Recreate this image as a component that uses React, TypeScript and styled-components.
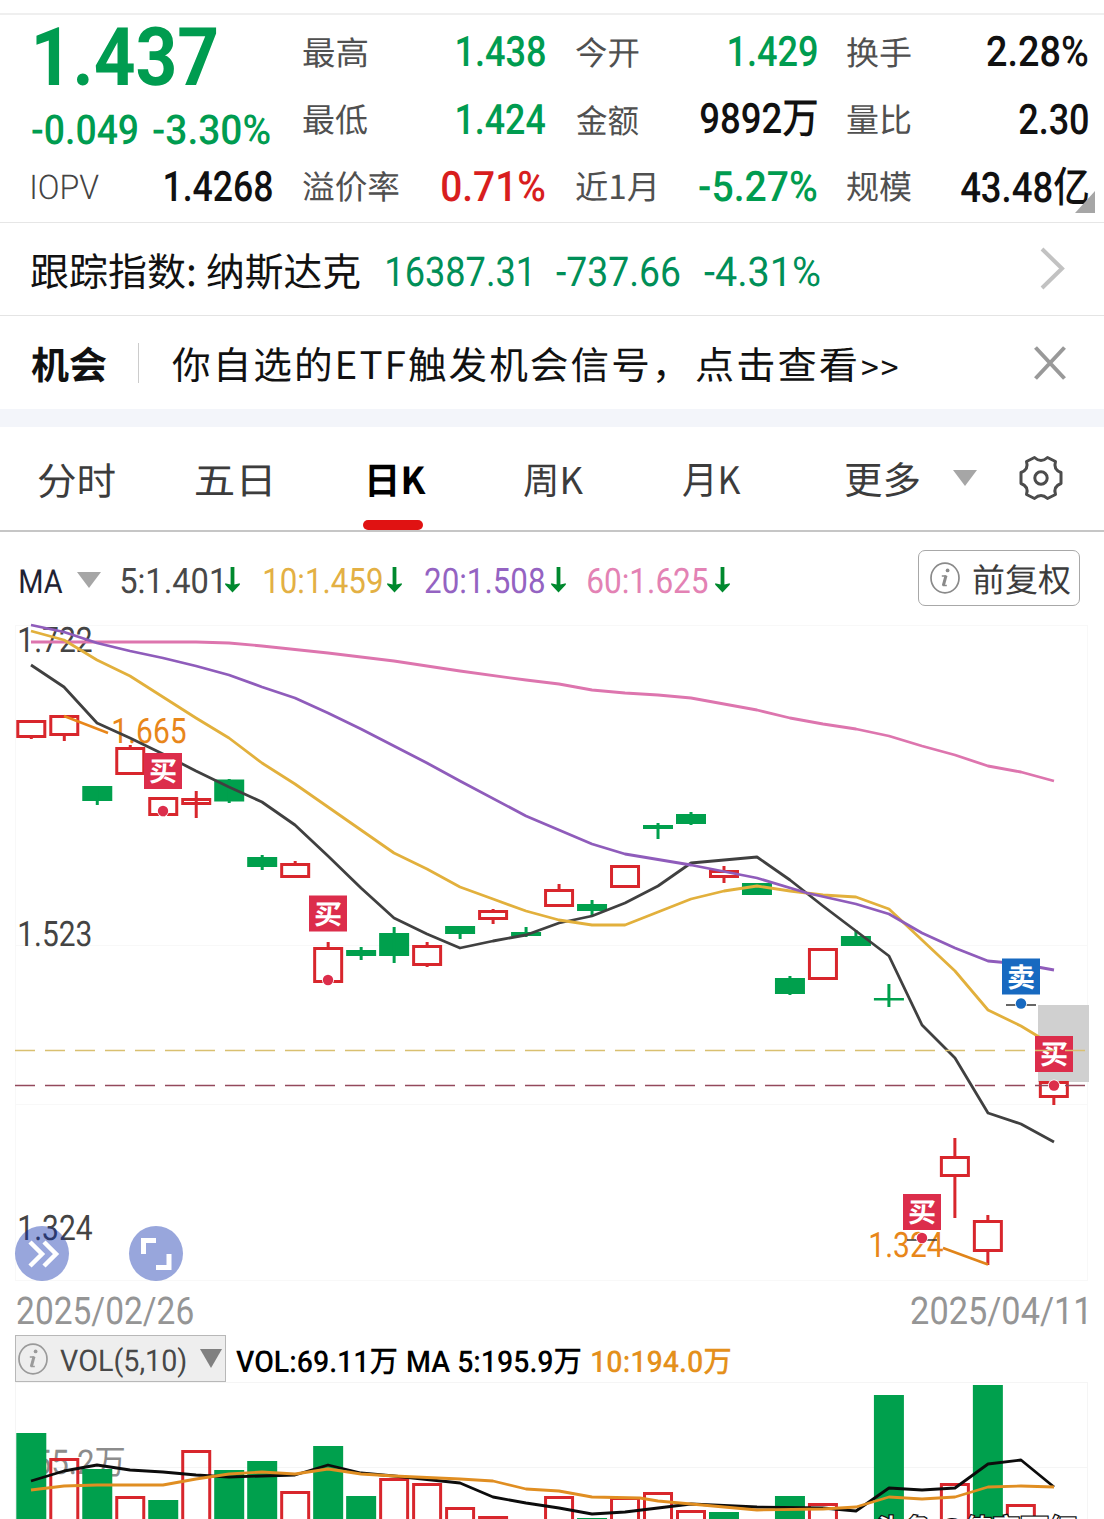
import React, { useLayoutEffect, useState } from "react";
import styled, { createGlobalStyle } from "styled-components";

const LATIN = 'Roboto, "Noto Sans CJK SC", sans-serif';
const HAN = '"Noto Sans CJK SC", "Noto Sans", sans-serif';
const GREEN = "#009c50";
const UP = "#d8262c";
const DOWN = "#00a04d";

const GlobalStyle = createGlobalStyle`
  *, *::before, *::after { box-sizing: border-box; }
  body { margin: 0; background: #fff; font-family: ${LATIN}; }
`;

/* ---------- text that is condensed to a given ink width ---------- */

type Ink = { left: number; width: number; ascent: number; descent: number; baseline: number };

function useInk(text: string, font: string, size: number, spacing = 0): Ink {
  const [ink, setInk] = useState<Ink>({ left: 0, width: 0, ascent: 0, descent: 0, baseline: 0 });
  useLayoutEffect(() => {
    const ctx = document.createElement("canvas").getContext("2d") as any;
    ctx.font = font;
    ctx.textRendering = "geometricPrecision";
    ctx.letterSpacing = `${spacing}px`;
    const m = ctx.measureText(text);
    setInk({
      left: m.actualBoundingBoxLeft,
      width: m.actualBoundingBoxLeft + m.actualBoundingBoxRight,
      ascent: m.actualBoundingBoxAscent,
      descent: m.actualBoundingBoxDescent,
      baseline: size / 2 + (m.fontBoundingBoxAscent - m.fontBoundingBoxDescent) / 2,
    });
  }, [text, font, size, spacing]);
  return ink;
}

const InkBox = styled.span<{ $w: number; $ml: number }>`
  display: block;
  flex: none;
  width: ${(p) => p.$w}px;
  margin-left: ${(p) => p.$ml}px;
`;

const InkRun = styled.span<{ $size: number; $weight: number; $color: string; $han: boolean; $ls: number }>`
  display: block;
  width: max-content;
  white-space: pre;
  transform-origin: 0 0;
  font-family: ${(p) => (p.$han ? HAN : LATIN)};
  font-size: ${(p) => p.$size}px;
  font-weight: ${(p) => p.$weight};
  line-height: ${(p) => p.$size}px;
  letter-spacing: ${(p) => p.$ls}px;
  text-rendering: geometricPrecision;
  color: ${(p) => p.$color};
`;

type TextProps = {
  children: string;
  w: number;
  size: number;
  weight?: number;
  color?: string;
  han?: boolean;
  ls?: number;
  ml?: number;
  dy?: number;
};

function Text({ children, w, size, weight = 400, color = "#111", han = false, ls = 0, ml = 0, dy = 0 }: TextProps) {
  const ink = useInk(children, `${weight} ${size}px ${han ? HAN : LATIN}`, size, ls);
  const s = ink.width ? w / ink.width : 1;
  return (
    <InkBox $w={w} $ml={ml} style={{ height: ink.ascent + ink.descent }}>
      <InkRun
        $size={size}
        $weight={weight}
        $color={color}
        $han={han}
        $ls={ls}
        style={{ transform: `translate(${ink.left * s}px, ${ink.ascent - ink.baseline + dy}px) scaleX(${s})` }}
      >
        {children}
      </InkRun>
    </InkBox>
  );
}

const ChartLabel = styled.text<{ $size: number; $weight: number }>`
  font-family: ${LATIN};
  font-size: ${(p) => p.$size}px;
  font-weight: ${(p) => p.$weight};
  text-rendering: geometricPrecision;
`;

function SvgText({ x, y, w, size, weight = 400, fill, children }: {
  x: number; y: number; w: number; size: number; weight?: number; fill: string; children: string;
}) {
  const ink = useInk(children, `${weight} ${size}px ${LATIN}`, size);
  const s = ink.width ? w / ink.width : 1;
  return (
    <ChartLabel $size={size} $weight={weight} fill={fill} transform={`translate(${x + ink.left * s} ${y}) scale(${s} 1)`}>
      {children}
    </ChartLabel>
  );
}

/* ---------- layout parts ---------- */

const Page = styled.main`
  width: 1104px;
  height: 1519px;
  overflow: hidden;
  background: #fff;
  display: flex;
  flex-direction: column;
`;

const TopRule = styled.div`
  flex: none;
  height: 15px;
  border-bottom: 2px solid #efefef;
`;

const Quote = styled.section`
  position: relative;
  flex: none;
  height: 208px;
  padding: 3px 16px 0 31px;
  display: flex;
  border-bottom: 1px solid #e6e6e6;
`;

const PriceColumn = styled.div`
  width: 241px;
  margin-right: 31px;
  display: grid;
  grid-template-rows: 76px 70px 46px;
`;

const Stats = styled.div`
  display: grid;
  grid-template-columns: 242px 241px 241px;
  grid-template-rows: 68px 67px 67px;
  column-gap: 30.5px;
`;

const Cell = styled.div`
  display: flex;
  align-items: center;
  justify-content: space-between;
`;

const Line = styled.div`
  display: flex;
  align-items: center;
`;

const Corner = styled.i`
  position: absolute;
  right: 9px;
  bottom: 9px;
  border-style: solid;
  border-width: 0 0 22px 20px;
  border-color: transparent transparent #a6a6a6 transparent;
`;

const InfoRow = styled.section<{ $h: number; $rule?: boolean }>`
  flex: none;
  display: flex;
  align-items: center;
  height: ${(p) => p.$h}px;
  padding: 0 38px 0 31px;
  border-bottom: ${(p) => (p.$rule ? "1px solid #e4e4e4" : "0")};
`;

const Divider = styled.span`
  width: 1px;
  height: 40px;
  margin-left: 31px;
  background: #ccc;
`;

const RightIcon = styled.svg`
  margin-left: auto;
  display: block;
`;

const Band = styled.div`
  flex: none;
  height: 18px;
  background: #f3f5fa;
`;

const Tabs = styled.nav`
  flex: none;
  display: flex;
  height: 105px;
  padding: 0 0 2px 38px;
  border-bottom: 2px solid #c6c6c6;
`;

const Tab = styled.div<{ $w: number; $active?: boolean }>`
  position: relative;
  width: ${(p) => p.$w}px;
  display: flex;
  align-items: center;
  &::after {
    content: "";
    display: ${(p) => (p.$active ? "block" : "none")};
    position: absolute;
    left: -6px;
    bottom: -2px;
    width: 60px;
    height: 10px;
    border-radius: 5px;
    background: #e01212;
  }
`;

const Triangle = styled.i<{ $w: number; $h: number; $ml: number; $color: string }>`
  flex: none;
  margin-left: ${(p) => p.$ml}px;
  border-style: solid;
  border-width: ${(p) => p.$h}px ${(p) => p.$w / 2}px 0;
  border-color: ${(p) => p.$color} transparent transparent;
`;

const MaRow = styled.section`
  flex: none;
  display: flex;
  align-items: center;
  height: 88px;
  padding: 8px 24px 0 20px;
`;

const ArrowIcon = styled.svg<{ $gap: number }>`
  flex: none;
  margin-left: ${(p) => p.$gap}px;
`;

const GearIcon = styled.svg`
  margin-left: 41px;
  align-self: center;
`;

const AdjustButton = styled.button`
  margin: -4px 0 0 auto;
  width: 162px;
  height: 56px;
  padding: 0 9px 0 11px;
  display: flex;
  align-items: center;
  justify-content: space-between;
  background: #fff;
  border: 1px solid #a8a8a8;
  border-radius: 7px;
`;

const ChartArea = styled.section`
  position: relative;
  flex: none;
  height: 661px;
`;

const ChartSvg = styled.svg`
  display: block;
`;

const RoundButton = styled.button<{ $left: number }>`
  position: absolute;
  left: ${(p) => p.$left}px;
  top: 606px;
  width: 54px;
  height: 55px;
  padding: 0;
  border: 0;
  border-radius: 50%;
  background: rgba(10, 43, 171, 0.42);
`;

const Dates = styled.div`
  flex: none;
  display: flex;
  align-items: center;
  justify-content: space-between;
  height: 54px;
  padding: 4px 18px 0 17px;
`;

const VolumeHeader = styled.div`
  flex: none;
  display: flex;
  align-items: center;
  height: 47px;
  padding-left: 15px;
`;

const Selector = styled.button`
  display: flex;
  align-items: center;
  width: 211px;
  height: 47px;
  padding: 0 0 0 2px;
  background: #eee;
  border: 1px solid #b8b8b8;
`;

/* ---------- icons ---------- */

const InfoIcon = ({ color }: { color: string }) => (
  <svg width="30" height="32" viewBox="0 0 30 32" fill="none" stroke={color}>
    <ellipse cx="15" cy="16" rx="14" ry="14.8" strokeWidth="1.7" />
    <circle cx="17.6" cy="8.4" r="1.9" fill={color} stroke="none" />
    <path d="M11.8 14h4l-2.600 9.600h3.600" strokeWidth="1.500" strokeLinejoin="round" />
    <path d="M16 13.600l-2.700 10" strokeWidth="3" />
  </svg>
);

const Arrow = ({ gap }: { gap: number }) => (
  <ArrowIcon $gap={gap} width="15" height="26" viewBox="0 0 15 26">
    <path d="M5.6 0h3.800v17.500l5.400-1.300v1.600L7.500 25.500 .2 17.800v-1.600l5.400 1.300z" fill="#00892e" />
  </ArrowIcon>
);

const Gear = () => (
  <GearIcon width="46" height="48" viewBox="-23 -24 46 48" fill="none" stroke="#4c4c4c" strokeWidth="3" strokeLinejoin="round">
    <path d="M-6.500-20.500Q0-14.500 6.500-20.500L14.500-16.500Q12-8.500 20-5.500V5.500Q12 8.500 14.500 16.500L6.500 20.500Q0 14.500-6.500 20.500L-14.500 16.500Q-12 8.500-20 5.500V-5.500Q-12-8.500-14.500-16.500Z" />
    <circle r="6.200" />
  </GearIcon>
);

/* ---------- data ---------- */

const X0 = 31.3;
const STEP = 32.985;
const cx = (i: number) => X0 + STEP * i;

// index, rising, body top, body bottom, wick top, wick bottom
const candles: [number, boolean, number, number, number, number][] = [
  [0, true, 720, 738, 720, 739], [1, true, 715, 736, 715, 741], [2, false, 786, 801, 786, 805],
  [3, true, 747, 775, 745, 775], [4, true, 797, 816, 797, 817], [5, true, 798, 805, 791, 818],
  [6, false, 779.5, 801.5, 779, 803], [7, false, 857, 867, 855, 870], [8, true, 863, 878, 861, 878],
  [9, true, 947, 983, 942, 983], [10, false, 950, 956, 947, 960], [11, false, 933, 956, 927, 963],
  [12, true, 945, 966, 942, 967], [13, false, 926, 934, 926, 939], [14, true, 910, 920, 909, 924],
  [15, false, 932, 936, 927, 937], [16, true, 889, 907, 884, 907], [17, false, 904, 911, 900, 915],
  [18, true, 865, 888, 865, 888], [19, false, 825, 829, 823, 839], [20, false, 814, 824, 812, 825],
  [21, true, 870, 878, 866, 883], [22, false, 883, 895, 883, 895], [23, false, 978, 994, 976, 995],
  [24, true, 948, 980, 948, 980], [25, false, 936, 946, 930, 946], [26, false, 998, 1000.5, 984, 1007],
  [28, true, 1156, 1177, 1138, 1218], [29, true, 1220, 1252, 1215, 1265], [31, true, 1081, 1098, 1081, 1105],
];

const volumes: [number, boolean, number][] = [
  [0, false, 1433], [1, true, 1458], [2, false, 1469], [3, true, 1496], [4, false, 1500], [5, true, 1450],
  [6, false, 1470], [7, false, 1461], [8, true, 1491], [9, false, 1446], [10, false, 1496], [11, true, 1478],
  [12, true, 1483], [13, true, 1507], [14, true, 1516], [16, true, 1496], [17, false, 1518], [18, true, 1497],
  [19, true, 1492], [20, true, 1510], [21, false, 1512], [23, false, 1496], [24, true, 1503], [26, false, 1395],
  [28, true, 1483], [29, false, 1385], [30, true, 1504],
];

const MA5 = "31,665 64,687 97,723 130,738 163,754 196,771 229,787 262,802 295,825 328,856 361,888 394,918 427,934 460,948 493,941 526,935 559,923 592,916 625,903 658,886 691,863 757,857 790,880 823,906 856,931 889,956 922,1025 955,1058 988,1113 1021,1124 1054,1142";
const MA10 = "31,631 64,640 97,660 130,676 163,697 196,718 229,738 262,763 295,784 328,807 361,830 394,853 427,869 460,887 493,899 526,911 559,920 592,925 625,925 658,912 691,899 724,891 757,886 790,891 823,895 856,897 889,909 922,940 955,971 988,1010 1021,1026 1054,1046";
const MA20 = "31,625 64,632 97,643 130,651 163,658 196,666 229,675 262,687 295,698 328,713 361,729 394,746 427,763 460,781 526,816 592,844 625,854 691,865 757,878 807,893 856,904 889,914 922,933 955,948 988,961 1021,964 1054,970";
const MA60 = "31,642 196,642 229,643 262,646 328,653 394,661 460,671 526,680 559,684 592,690 625,693 658,695 691,698 757,710 790,718 823,724 856,729 889,736 922,746 955,755 988,766 1021,772 1054,781";
const VMA5 = "31,1481 64,1471 97,1465 130,1470 163,1472 196,1475 229,1477 262,1476 295,1475 328,1465 361,1473 394,1476 460,1483 493,1497 526,1503 559,1508 592,1514 625,1512 658,1508 691,1504 757,1507 823,1508 856,1511 889,1488 922,1490 955,1488 988,1464 1021,1460 1054,1487";
const VMA10 = "31,1490 64,1486 97,1485 163,1485 196,1479 229,1474 262,1472 295,1474 328,1469 361,1474 394,1476 460,1479 493,1481 526,1489 559,1491 592,1497 640,1498 658,1501 691,1504 757,1510 823,1509 856,1507 889,1497 922,1499 955,1497 988,1487 1021,1486 1054,1487";

function Candle({ c }: { c: [number, boolean, number, number, number, number] }) {
  const [i, up, top, bottom, hi, lo] = c;
  const x = cx(i);
  if (!up) {
    return (
      <g fill={DOWN}>
        <rect x={x - 15} y={top} width="30" height={bottom - top} />
        <rect x={x - 1.5} y={hi} width="3" height={lo - hi} />
      </g>
    );
  }
  return (
    <g>
      <rect x={x - 1.5} y={hi} width="3" height={top - hi} fill={UP} />
      <rect x={x - 1.5} y={bottom} width="3" height={lo - bottom} fill={UP} />
      {i === 5 && <rect x={x - 1.5} y={top} width="3" height={bottom - top} fill={UP} />}
      <rect x={x - 13.5} y={top + 1.5} width="27" height={bottom - top - 3} fill="none" stroke={UP} strokeWidth="3" />
    </g>
  );
}

function Badge({ x, y, color, label, dotY, line }: {
  x: number; y: number; color: string; label: string; dotY: number; line?: number;
}) {
  return (
    <g>
      {line && <path d={`M${x - 15} ${line}h30`} stroke="#333" strokeWidth="1.5" />}
      <circle cx={x} cy={dotY} r="6" fill="#fff" />
      <circle cx={x} cy={dotY} r="5.2" fill={color} />
      <rect x={x - 19} y={y} width="38" height="36" fill={color} />
      <SvgText x={x - 13} y={y + 28} w={26} size={27} weight={600} fill="#fff">{label}</SvgText>
    </g>
  );
}

const Curve = ({ points, color, width = 2.8 }: { points: string; color: string; width?: number }) => (
  <polyline points={points} fill="none" stroke={color} strokeWidth={width} strokeLinejoin="round" />
);

function PriceChart() {
  return (
    <ChartSvg width="1104" height="661" viewBox="0 620 1104 661">
      <path d="M15.5 625.5H1088M15.5 945.5H1088M15.5 1104.5H1088M15.5 1280.5H1088M15.5 625V1281M1087.5 625V1281" stroke="#f8f8f8" fill="none" />
      <rect x="1038" y="1005" width="51" height="77" fill="#d0d0d0" />
      <SvgText x={19} y={652} w={73} size={35} fill="#444">1.722</SvgText>
      <SvgText x={19} y={946} w={72} size={35} fill="#444">1.523</SvgText>
      <SvgText x={19} y={1240} w={73} size={35} fill="#444">1.324</SvgText>
      {candles.map((c) => <Candle key={c[0]} c={c} />)}
      <path d="M64 716L108 733" stroke="#e8861a" strokeWidth="2.5" />
      <SvgText x={113} y={743} w={73} size={35} fill="#e8861a">1.665</SvgText>
      <Curve points={MA60} color="#dd75ae" />
      <Curve points={MA5} color="#404040" />
      <Curve points={MA10} color="#e2b03c" />
      <Curve points={MA20} color="#8f5cbb" />
      <path d="M943 1248L988 1264.5" stroke="#e0841a" strokeWidth="2.8" />
      <SvgText x={870} y={1257} w={73} size={35} fill="#e8861a">1.324</SvgText>
      <path d="M15 1085.5H1085" stroke="#93495c" strokeWidth="1.5" strokeDasharray="20 10" />
      <Badge x={163} y={753} color="#dc2d4b" label="买" dotY={811} />
      <Badge x={328} y={895.5} color="#dc2d4b" label="买" dotY={980} />
      <Badge x={922} y={1194} color="#dc2d4b" label="买" dotY={1238} line={1240} />
      <Badge x={1021} y={958.5} color="#1769c0" label="卖" dotY={1003.5} line={1005} />
      <Badge x={1054} y={1036} color="#dc2d4b" label="买" dotY={1085.5} />
      <path d="M15 1050.5H1085" stroke="#d9c070" strokeWidth="1.5" strokeDasharray="20 10" />
    </ChartSvg>
  );
}

function VolumeChart() {
  return (
    <ChartSvg width="1104" height="137" viewBox="0 1382 1104 137">
      <path d="M15.5 1382.5H1088M15.5 1467.5H1088M15.5 1382V1519M1087.5 1382V1519" stroke="#f5f5f5" fill="none" />
      <SvgText x={17} y={1474} w={107} size={34} fill="#8c8c8c">255.2万</SvgText>
      {volumes.map(([i, up, y]) =>
        up ? (
          <rect key={i} x={cx(i) - 13.5} y={y + 1.5} width="27" height="180" fill="none" stroke={UP} strokeWidth="3" />
        ) : (
          <rect key={i} x={cx(i) - 15} y={y} width="30" height="180" fill={DOWN} />
        ),
      )}
      <Curve points={VMA5} color="#0c0c0c" />
      <Curve points={VMA10} color="#e08e22" />
      <g stroke="#111" strokeWidth="2.500" paintOrder="stroke">
        <SvgText x={876} y={1538} w={200} size={27} weight={500} fill="#fff">头条 @倚窗丽红</SvgText>
      </g>
    </ChartSvg>
  );
}

const stats: { label: string; lw: number; value: string; vw: number; color: string }[] = [
  { label: "最高", lw: 64, value: "1.438", vw: 88, color: GREEN },
  { label: "今开", lw: 63, value: "1.429", vw: 88, color: GREEN },
  { label: "换手", lw: 64, value: "2.28%", vw: 101, color: "#111" },
  { label: "最低", lw: 64, value: "1.424", vw: 88, color: GREEN },
  { label: "金额", lw: 63, value: "9892万", vw: 117, color: "#111" },
  { label: "量比", lw: 64, value: "2.30", vw: 69, color: "#111" },
  { label: "溢价率", lw: 96, value: "0.71%", vw: 103, color: "#d81e1e" },
  { label: "近1月", lw: 79, value: "-5.27%", vw: 118, color: GREEN },
  { label: "规模", lw: 64, value: "43.48亿", vw: 127, color: "#111" },
];

const averages = [
  { text: "5:1.401", w: 100, color: "#484848", ml: 20, gap: 4 },
  { text: "10:1.459", w: 118, color: "#e3b044", ml: 24, gap: 5 },
  { text: "20:1.508", w: 119, color: "#9463c2", ml: 23, gap: 7 },
  { text: "60:1.625", w: 120, color: "#e382b4", ml: 22, gap: 7 },
];

export default function App() {
  return (
    <Page>
      <GlobalStyle />
      <TopRule />
      <Quote>
        <PriceColumn>
          <Line><Text w={181} size={81} weight={700} color={GREEN} ml={5}>1.437</Text></Line>
          <Line>
            <Text w={105} size={41} weight={500} color={GREEN} ml={1}>-0.049</Text>
            <Text w={117} size={41} weight={500} color={GREEN} ml={16}>-3.30%</Text>
          </Line>
          <Cell>
            <Text w={67} size={34} weight={300} color="#444" ml={1}>IOPV</Text>
            <Text w={107} size={42} weight={500} dy={-1}>1.4268</Text>
          </Cell>
        </PriceColumn>
        <Stats>
          {stats.map((s) => (
            <Cell key={s.label}>
              <Text w={s.lw} size={33} color="#505050" han>{s.label}</Text>
              <Text w={s.vw} size={42} weight={500} color={s.color} dy={-1}>{s.value}</Text>
            </Cell>
          ))}
        </Stats>
        <Corner />
      </Quote>

      <InfoRow $h={93} $rule>
        <Text w={163} size={39} han dy={2}>跟踪指数:</Text>
        <Text w={153} size={39} han ml={13} dy={2}>纳斯达克</Text>
        <Text w={142} size={41} color="#008f58" ml={27} dy={2}>16387.31</Text>
        <Text w={124} size={41} color="#008f58" ml={27} dy={2}>-737.66</Text>
        <Text w={116} size={41} color="#008f58" ml={24} dy={2}>-4.31%</Text>
        <RightIcon width="26" height="44" viewBox="0 0 26 44" fill="none" stroke="#c2c2c2" strokeWidth="4">
          <path d="M2 2L22 21.5L2 41" />
        </RightIcon>
      </InfoRow>
      <InfoRow $h={93}>
        <Text w={76} size={38} weight={700} han dy={2}>机会</Text>
        <Divider />
        <Text w={493} size={38} ls={2} han ml={33} dy={2}>你自选的ETF触发机会信号，</Text>
        <Text w={160} size={38} ls={2} han ml={31} dy={2}>点击查看</Text>
        <Text w={36} size={33} ls={2} han ml={6} dy={5}>&gt;&gt;</Text>
        <RightIcon width="32" height="34" viewBox="0 0 32 34" fill="none" stroke="#999" strokeWidth="4">
          <path d="M1.5 1.5L30.5 32.5M30.5 1.5L1.5 32.5" />
        </RightIcon>
      </InfoRow>
      <Band />

      <Tabs>
        <Tab $w={158}><Text w={77} size={38} color="#3c3c3c" han dy={3}>分时</Text></Tab>
        <Tab $w={173}><Text w={74} size={37} color="#3c3c3c" han dy={3}>五日</Text></Tab>
        <Tab $w={155} $active><Text w={57} size={37} weight={700} color="#000" han dy={3}>日K</Text></Tab>
        <Tab $w={159}><Text w={59} size={37} color="#3c3c3c" han dy={3}>周K</Text></Tab>
        <Tab $w={162}><Text w={58} size={38} color="#3c3c3c" han dy={3}>月K</Text></Tab>
        <Line>
          <Text w={74} size={38} color="#3c3c3c" han dy={2}>更多</Text>
          <Triangle $w={24} $h={16} $ml={34} $color="#a6a6a6" />
        </Line>
        <Gear />
      </Tabs>

      <MaRow>
        <Text w={43} size={33} color="#1f2233" dy={1}>MA</Text>
        <Triangle $w={24} $h={16} $ml={14} $color="#a6a6a6" />
        {averages.map((a) => (
          <React.Fragment key={a.text}>
            <Text w={a.w} size={35} color={a.color} ml={a.ml}>{a.text}</Text>
            <Arrow gap={a.gap} />
          </React.Fragment>
        ))}
        <AdjustButton>
          <InfoIcon color="#8a8a8a" />
          <Text w={97} size={33} color="#3c3c3c" han dy={1}>前复权</Text>
        </AdjustButton>
      </MaRow>

      <ChartArea>
        <PriceChart />
        <RoundButton $left={15} aria-label="back">
          <svg width="54" height="55" viewBox="0 0 54 55" fill="none" stroke="#fff" strokeWidth="4.5">
            <path d="M15 16L27 28L15 40M29 16L41 28L29 40" />
          </svg>
        </RoundButton>
        <RoundButton $left={129} aria-label="fullscreen">
          <svg width="54" height="55" viewBox="0 0 54 55" fill="none" stroke="#fff" strokeWidth="5">
            <path d="M27 14.5H14.5V28M40 28V41.5H27" />
          </svg>
        </RoundButton>
      </ChartArea>

      <Dates>
        <Text w={176} size={38} color="#959595" dy={1}>2025/02/26</Text>
        <Text w={175} size={38} color="#959595" dy={1}>2025/04/11</Text>
      </Dates>

      <VolumeHeader>
        <Selector>
          <InfoIcon color="#9a9a9a" />
          <Text w={126} size={30} color="#484848" ml={12} dy={3}>VOL(5,10)</Text>
          <Triangle $w={22} $h={19} $ml={14} $color="#808080" />
        </Selector>
        <Text w={161} size={30} weight={500} color="#000" ml={10} dy={3}>VOL:69.11万</Text>
        <Text w={173} size={30} weight={500} color="#000" ml={11} dy={3}>MA 5:195.9万</Text>
        <Text w={139} size={30} weight={500} color="#e4901c" ml={11} dy={3}>10:194.0万</Text>
      </VolumeHeader>
      <VolumeChart />
    </Page>
  );
}
